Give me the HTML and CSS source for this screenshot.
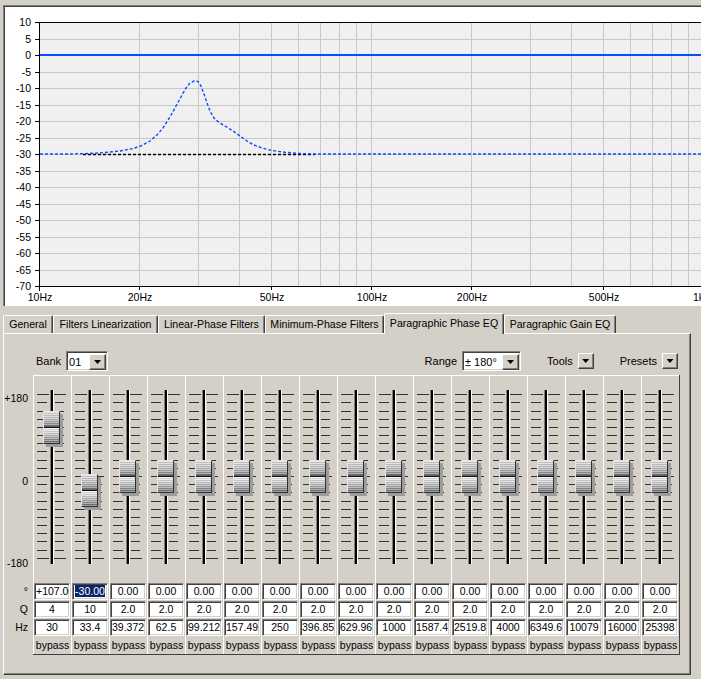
FILE: index.html
```html
<!DOCTYPE html>
<html>
<head>
<meta charset="utf-8">
<link rel="stylesheet" href="styles.css">
</head>
<body>
<svg class="defs" width="0" height="0">
  <defs>
    <symbol id="trk" viewBox="0 0 37 207">
      <rect x="16" y="14" width="1" height="174" fill="#808080"/>
      <rect x="17" y="14" width="2" height="174" fill="#000"/>
      <rect x="19" y="14" width="1" height="174" fill="#fff"/>
      <path stroke="#333" stroke-width="1" shape-rendering="crispEdges" d="M3 18.5h12M20 18.5h12M3 26.5h10M21 26.5h9M3 35.5h10M21 35.5h9M3 43.5h10M21 43.5h9M3 51.5h10M21 51.5h9M3 59.5h10M21 59.5h9M3 67.5h10M21 67.5h9M3 75.5h10M21 75.5h9M3 84.5h10M21 84.5h9M3 92.5h10M21 92.5h9M3 100.5h12M20 100.5h12M3 108.5h10M21 108.5h9M3 116.5h10M21 116.5h9M3 125.5h10M21 125.5h9M3 133.5h10M21 133.5h9M3 141.5h10M21 141.5h9M3 149.5h10M21 149.5h9M3 157.5h10M21 157.5h9M3 165.5h10M21 165.5h9M3 174.5h10M21 174.5h9M3 182.5h12M20 182.5h12"/>
    </symbol>
  </defs>
</svg>

<div class="top">
  <div class="frame-outer">
    <div class="frame-inner">
      <svg class="chart" width="696" height="299" viewBox="5 7 696 299">
        <rect x="40" y="22" width="661" height="264" fill="#f0f0f0"/>
        <g stroke="#c8c8c8" stroke-width="1" shape-rendering="crispEdges" fill="none">
          <path d="M40 39.5H701M40 72.5H701M40 88.5H701M40 105.5H701M40 121.5H701M40 138.5H701M40 154.5H701M40 171.5H701M40 187.5H701M40 204.5H701M40 220.5H701M40 237.5H701M40 253.5H701M40 270.5H701"/>
          <path d="M139.5 23V286M198.5 23V286M239.5 23V286M271.5 23V286M298.5 23V286M320.5 23V286M339.5 23V286M356.5 23V286M371.5 23V286M471.5 23V286M530.5 23V286M571.5 23V286M603.5 23V286M630.5 23V286M652.5 23V286M671.5 23V286M688.5 23V286"/>
        </g>
        <g stroke="#000" stroke-width="1" shape-rendering="crispEdges" fill="none">
          <path d="M39 22.5H701M39.5 22V291M35 286.5H701"/>
          <path d="M35 22.5h4M35 39.5h4M35 55.5h4M35 72.5h4M35 88.5h4M35 105.5h4M35 121.5h4M35 138.5h4M35 154.5h4M35 171.5h4M35 187.5h4M35 204.5h4M35 220.5h4M35 237.5h4M35 253.5h4M35 270.5h4"/>
          <path d="M139.5 286v4M271.5 286v4M371.5 286v4M471.5 286v4M603.5 286v4"/>
        </g>
        <g class="ylab" text-anchor="end">
          <text x="31" y="26">10</text>
          <text x="31" y="43">5</text>
          <text x="31" y="59">0</text>
          <text x="31" y="76">-5</text>
          <text x="31" y="92">-10</text>
          <text x="31" y="109">-15</text>
          <text x="31" y="125">-20</text>
          <text x="31" y="142">-25</text>
          <text x="31" y="158">-30</text>
          <text x="31" y="175">-35</text>
          <text x="31" y="191">-40</text>
          <text x="31" y="208">-45</text>
          <text x="31" y="224">-50</text>
          <text x="31" y="241">-55</text>
          <text x="31" y="257">-60</text>
          <text x="31" y="274">-65</text>
          <text x="31" y="290">-70</text>
        </g>
        <g class="xlab" text-anchor="middle">
          <text x="40" y="301">10Hz</text>
          <text x="140" y="301">20Hz</text>
          <text x="272" y="301">50Hz</text>
          <text x="372" y="301">100Hz</text>
          <text x="472" y="301">200Hz</text>
          <text x="604" y="301">500Hz</text>
          <text x="705" y="301">1kHz</text>
        </g>
        <rect x="40" y="54" width="661" height="2" fill="#0a4cff"/>
        <path d="M83 154.5H315" stroke="#000" stroke-width="1.7" stroke-dasharray="3 2" fill="none"/>
        <polyline fill="none" stroke="#0a4cff" stroke-width="1.4" stroke-dasharray="3 2"
          points="40,154 70,154 90,153.5 105,152.5 120,151 133,148.5 142,145.5 150,141 157,135 163,128 170,117 176,106 181,97 186,88 190,83 194,81 198,81.5 201,86 204,94 207,103 210,111 214,118 219,122.5 226,126.5 233,131 240,136 247,141 254,145 262,148 272,150.5 285,152.3 300,153.5 315,154 701,154"/>
      </svg>
    </div>
  </div>
</div>

<div class="tabs">
  <div class="tab w-general">General</div>
  <div class="tab w-lin">Filters Linearization</div>
  <div class="tab w-lpf">Linear-Phase Filters</div>
  <div class="tab w-mpf">Minimum-Phase Filters</div>
  <div class="tab active w-ppe">Paragraphic Phase EQ</div>
  <div class="tab w-pge">Paragraphic Gain EQ</div>
</div>

<div class="panel">
  <div class="controls">
    <span class="lbl">Bank</span>
    <div class="combo bank-combo"><span class="combo-text">01</span><span class="combo-btn"><i class="tri"></i></span></div>
    <span class="lbl range-lbl">Range</span>
    <div class="combo range-combo"><span class="combo-text">± 180°</span><span class="combo-btn"><i class="tri"></i></span></div>
    <span class="lbl gap-lbl">Tools</span>
    <span class="btn"><i class="tri"></i></span>
    <span class="lbl gap-lbl">Presets</span>
    <span class="btn"><i class="tri"></i></span>
  </div>

  <div class="eq">
    <div class="scale">
      <div class="slbl s180">+180</div>
      <div class="slbl s0">0</div>
      <div class="slbl sm180">-180</div>
      <div class="srow srow-first">°</div>
      <div class="srow">Q</div>
      <div class="srow">Hz</div>
    </div>
    <div class="cols">
      <div class="col"><div class="slider"><svg class="ticks" width="37" height="207"><use href="#trk"/></svg><div class="thumb" style="top:35px"></div></div><div class="val">+107.00</div><div class="val">4</div><div class="val">30</div><div class="bypass">bypass</div></div>
      <div class="col"><div class="slider"><svg class="ticks" width="37" height="207"><use href="#trk"/></svg><div class="thumb" style="top:98px"></div></div><div class="val"><span class="sel">-30.00</span></div><div class="val">10</div><div class="val">33.4</div><div class="bypass">bypass</div></div>
      <div class="col"><div class="slider"><svg class="ticks" width="37" height="207"><use href="#trk"/></svg><div class="thumb" style="top:84px"></div></div><div class="val">0.00</div><div class="val">2.0</div><div class="val">39.372</div><div class="bypass">bypass</div></div>
      <div class="col"><div class="slider"><svg class="ticks" width="37" height="207"><use href="#trk"/></svg><div class="thumb" style="top:84px"></div></div><div class="val">0.00</div><div class="val">2.0</div><div class="val">62.5</div><div class="bypass">bypass</div></div>
      <div class="col"><div class="slider"><svg class="ticks" width="37" height="207"><use href="#trk"/></svg><div class="thumb" style="top:84px"></div></div><div class="val">0.00</div><div class="val">2.0</div><div class="val">99.212</div><div class="bypass">bypass</div></div>
      <div class="col"><div class="slider"><svg class="ticks" width="37" height="207"><use href="#trk"/></svg><div class="thumb" style="top:84px"></div></div><div class="val">0.00</div><div class="val">2.0</div><div class="val">157.49</div><div class="bypass">bypass</div></div>
      <div class="col"><div class="slider"><svg class="ticks" width="37" height="207"><use href="#trk"/></svg><div class="thumb" style="top:84px"></div></div><div class="val">0.00</div><div class="val">2.0</div><div class="val">250</div><div class="bypass">bypass</div></div>
      <div class="col"><div class="slider"><svg class="ticks" width="37" height="207"><use href="#trk"/></svg><div class="thumb" style="top:84px"></div></div><div class="val">0.00</div><div class="val">2.0</div><div class="val">396.85</div><div class="bypass">bypass</div></div>
      <div class="col"><div class="slider"><svg class="ticks" width="37" height="207"><use href="#trk"/></svg><div class="thumb" style="top:84px"></div></div><div class="val">0.00</div><div class="val">2.0</div><div class="val">629.96</div><div class="bypass">bypass</div></div>
      <div class="col"><div class="slider"><svg class="ticks" width="37" height="207"><use href="#trk"/></svg><div class="thumb" style="top:84px"></div></div><div class="val">0.00</div><div class="val">2.0</div><div class="val">1000</div><div class="bypass">bypass</div></div>
      <div class="col"><div class="slider"><svg class="ticks" width="37" height="207"><use href="#trk"/></svg><div class="thumb" style="top:84px"></div></div><div class="val">0.00</div><div class="val">2.0</div><div class="val">1587.4</div><div class="bypass">bypass</div></div>
      <div class="col"><div class="slider"><svg class="ticks" width="37" height="207"><use href="#trk"/></svg><div class="thumb" style="top:84px"></div></div><div class="val">0.00</div><div class="val">2.0</div><div class="val">2519.8</div><div class="bypass">bypass</div></div>
      <div class="col"><div class="slider"><svg class="ticks" width="37" height="207"><use href="#trk"/></svg><div class="thumb" style="top:84px"></div></div><div class="val">0.00</div><div class="val">2.0</div><div class="val">4000</div><div class="bypass">bypass</div></div>
      <div class="col"><div class="slider"><svg class="ticks" width="37" height="207"><use href="#trk"/></svg><div class="thumb" style="top:84px"></div></div><div class="val">0.00</div><div class="val">2.0</div><div class="val">6349.6</div><div class="bypass">bypass</div></div>
      <div class="col"><div class="slider"><svg class="ticks" width="37" height="207"><use href="#trk"/></svg><div class="thumb" style="top:84px"></div></div><div class="val">0.00</div><div class="val">2.0</div><div class="val">10079</div><div class="bypass">bypass</div></div>
      <div class="col"><div class="slider"><svg class="ticks" width="37" height="207"><use href="#trk"/></svg><div class="thumb" style="top:84px"></div></div><div class="val">0.00</div><div class="val">2.0</div><div class="val">16000</div><div class="bypass">bypass</div></div>
      <div class="col"><div class="slider"><svg class="ticks" width="37" height="207"><use href="#trk"/></svg><div class="thumb" style="top:84px"></div></div><div class="val">0.00</div><div class="val">2.0</div><div class="val">25398</div><div class="bypass">bypass</div></div>
    </div>
  </div>
</div>
</body>
</html>
```
FILE: styles.css
```css
* { box-sizing: border-box; }
html, body { margin: 0; padding: 0; }
body {
  width: 701px;
  height: 679px;
  overflow: hidden;
  background: #d4d0c8;
  font-family: "Liberation Sans", Arial, sans-serif;
  font-size: 10.5px;
  color: #000;
}
.defs { display: block; width: 0; height: 0; overflow: hidden; }

/* chart */
.top { height: 306px; padding: 5px 0 0 3px; }
.frame-outer { height: 301px; border-top: 1px solid #808080; border-left: 1px solid #808080; }
.frame-inner { height: 300px; border-top: 1px solid #404040; border-left: 1px solid #404040; background: #fff; }
.chart { display: block; }
.chart text { font-family: "Liberation Sans", Arial, sans-serif; font-size: 10.5px; fill: #000; }

/* tabs */
.tabs { display: flex; align-items: flex-end; height: 20px; margin-top: 7px; padding-left: 3px; }
.tab {
  height: 18px;
  line-height: 16px;
  text-align: center;
  white-space: nowrap;
  background: #d4d0c8;
  border-top: 1px solid #fff;
  border-left: 1px solid #fff;
  border-right: 1px solid #404040;
  box-shadow: inset -1px 0 #808080;
  border-radius: 2px 2px 0 0;
  font-size: 10.6px;
}
.tab.active { height: 21px; line-height: 18px; margin-bottom: -1px; position: relative; z-index: 1; }
.w-general { width: 50px; }
.w-lin { width: 105px; }
.w-lpf { width: 107px; }
.w-mpf { width: 119px; }
.w-ppe { width: 120px; }
.w-pge { width: 112px; }

/* panel */
.panel {
  margin-left: 3px;
  width: 688px;
  height: 342px;
  padding-top: 17px;
  border-top: 1px solid #fff;
  border-left: 1px solid #fff;
  border-right: 1px solid #404040;
  border-bottom: 1px solid #404040;
  box-shadow: inset -1px -1px #808080;
}
.controls { display: flex; align-items: center; height: 20px; padding-left: 32px; padding-right: 12px; font-size: 11px; }
.lbl { margin-right: 5px; white-space: nowrap; }
.range-lbl { margin-left: auto; }
.gap-lbl { margin-left: 26px; }
.combo {
  display: flex;
  height: 20px;
  padding: 2px 1px 2px 2px;
  background: #fff;
  border: 1px solid;
  border-color: #808080 #fff #fff #808080;
  box-shadow: inset 1px 1px #404040, inset -1px -1px #d4d0c8;
}
.bank-combo { width: 42px; }
.range-combo { width: 59px; }
.combo-text { flex: 1; line-height: 16px; white-space: nowrap; }
.combo-btn, .btn {
  display: flex;
  align-items: center;
  justify-content: center;
  width: 17px;
  height: 16px;
  background: #d4d0c8;
  border: 1px solid;
  border-color: #fff #404040 #404040 #fff;
  box-shadow: inset -1px -1px #808080;
}
.btn { width: 16px; }
.tri { display: block; width: 7px; height: 4px; background: #000; clip-path: polygon(0 0, 100% 0, 50% 100%); }

/* eq */
.eq { display: flex; margin-top: 4px; height: 280px; }
.scale { width: 29px; padding-right: 5px; text-align: right; }
.slbl { height: 12px; line-height: 12px; }
.s180 { margin-top: 17px; }
.s0 { margin-top: 71px; }
.sm180 { margin-top: 70px; }
.srow { height: 17px; line-height: 17px; margin-top: 1px; }
.srow-first { margin-top: 14px; }

.cols { display: flex; height: 280px; border-right: 1px solid #404040; border-bottom: 1px solid #404040; }
.col { width: 38px; border-left: 1px solid #fff; border-top: 1px solid #fff; }
.slider { position: relative; height: 207px; }
.ticks { display: block; }
.thumb {
  position: absolute;
  left: 9px;
  width: 17px;
  height: 33px;
  border-top: 1px solid #e4e4e4;
  border-left: 1px solid #e4e4e4;
  border-right: 1px solid #303030;
  border-bottom: 1px solid #303030;
  box-shadow: 3px 3px 0 #9c9c9c;
  background-image:
    repeating-linear-gradient(to bottom, rgba(255,255,255,0.35) 0 1px, rgba(0,0,0,0.10) 1px 2px),
    linear-gradient(to bottom, #dcdcdc 0%, #c6c6c6 20%, #9c9c9c 36%, #6c6c6c 46%, #111 46%, #111 52%, #f2f2f2 52%, #d6d6d6 66%, #a6a6a6 83%, #666 100%);
}
.val {
  width: 36px;
  height: 17px;
  margin-bottom: 1px;
  padding: 0 1px;
  background: #fff;
  border-top: 1px solid #808080;
  border-left: 1px solid #808080;
  border-right: 1px solid #fff;
  border-bottom: 1px solid #fff;
  box-shadow: inset 1px 1px #404040, inset -1px -1px #d4d0c8;
  text-align: center;
  line-height: 15px;
  white-space: nowrap;
  overflow: hidden;
}
.sel { background: #0a246a; color: #fff; }
.bypass { height: 17px; line-height: 17px; text-align: center; white-space: nowrap; overflow: hidden; }
```
